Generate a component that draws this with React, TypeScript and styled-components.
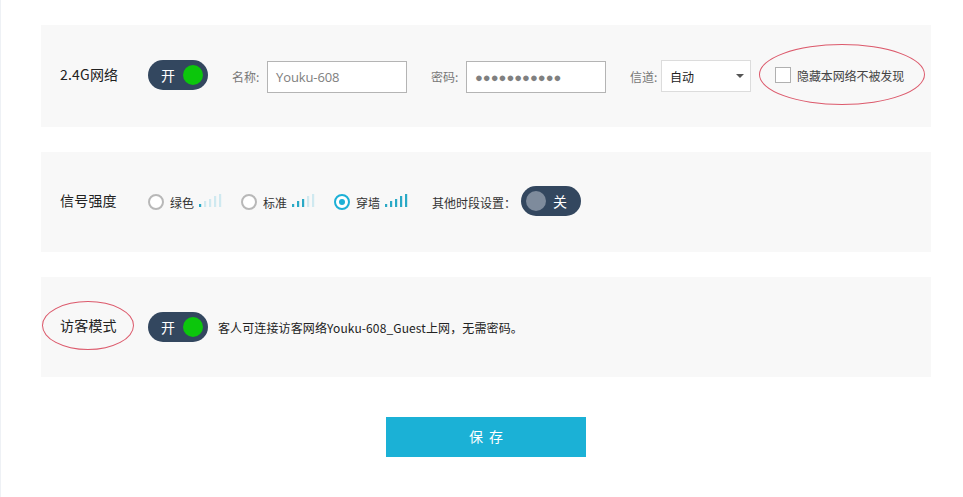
import React from "react";
import styled, { createGlobalStyle } from "styled-components";

const Global = createGlobalStyle`
  html, body {
    margin: 0;
    padding: 0;
    background: #fff;
  }
  body {
    font-family: "Noto Sans CJK SC", "Open Sans", sans-serif;
    overflow: hidden;
  }
`;

const Page = styled.div`
  width: 963px;
  height: 497px;
  box-sizing: border-box;
  padding: 25px 32px 0 40px;
  border-left: 1px solid #eef1f5;
  display: flex;
  flex-direction: column;
  gap: 25px;
`;

const Panel = styled.section<{ $h: number }>`
  height: ${(p) => p.$h}px;
  background: #f8f8f8;
  display: flex;
  align-items: center;
  padding-left: 19px;
  position: relative;
`;

const RowTitle = styled.div`
  width: 88px;
  flex: none;
  font-size: 14px;
  letter-spacing: 0.2px;
  color: #222;
  line-height: 20px;
  margin-top: -4px;
`;

const Toggle = styled.div<{ $on: boolean; $lift?: boolean }>`
  width: 60px;
  height: 30px;
  flex: none;
  box-sizing: border-box;
  margin-top: ${(p) => (p.$lift ? "-2px" : "0")};
  border-radius: 15px;
  background: #33475f;
  display: flex;
  flex-direction: ${(p) => (p.$on ? "row" : "row-reverse")};
  align-items: center;
  justify-content: space-between;
  padding: 0 ${(p) => (p.$on ? "5px" : "14px")} 0 ${(p) => (p.$on ? "13px" : "5px")};
  color: #fff;
  font-size: 14px;
`;

const Knob = styled.span<{ $on: boolean }>`
  width: 20px;
  height: 20px;
  border-radius: 50%;
  background: ${(p) => (p.$on ? "#0cc60c" : "#7e8b9c")};
`;

const FieldLabel = styled.label<{ $gap?: number }>`
  width: 27px;
  flex: none;
  margin-left: 24px;
  margin-right: ${(p) => p.$gap ?? 8}px;
  font-size: 12px;
  color: #777;
  white-space: nowrap;
`;

const TextBox = styled.div<{ $dots?: boolean }>`
  width: 140px;
  height: 32px;
  box-sizing: border-box;
  flex: none;
  margin-top: 2px;
  border: 1px solid #b4b4b4;
  background: #fff;
  padding-left: 8px;
  display: flex;
  align-items: center;
  font-family: "Open Sans", sans-serif;
  font-size: 13px;
  color: #808080;
  letter-spacing: ${(p) => (p.$dots ? "0" : "-0.1px")};
`;

const SelectBox = styled.div`
  width: 90px;
  height: 32px;
  box-sizing: border-box;
  flex: none;
  border: 1px solid #dcdcdc;
  background: #fff;
  padding: 0 6px 0 8px;
  display: flex;
  align-items: center;
  justify-content: space-between;
  font-size: 12px;
  color: #222;
`;

const Caret = styled.span`
  width: 0;
  height: 0;
  border-left: 4px solid transparent;
  border-right: 4px solid transparent;
  border-top: 4px solid #555;
`;

const CheckRow = styled.div`
  margin-left: 24px;
  display: flex;
  align-items: center;
  gap: 6px;
  font-size: 12px;
  letter-spacing: -0.1px;
  color: #444;
  margin-top: -2px;
`;

const CheckBox = styled.span`
  width: 16px;
  height: 16px;
  box-sizing: border-box;
  background: #fff;
  border: 1px solid #b0b0b0;
`;

const Option = styled.div<{ $left?: number }>`
  display: flex;
  align-items: center;
  margin-left: ${(p) => p.$left ?? 0}px;
  font-size: 12px;
  color: #333;
`;

const Radio = styled.span<{ $on?: boolean }>`
  width: 16px;
  height: 16px;
  box-sizing: border-box;
  flex: none;
  border-radius: 50%;
  background: #fff;
  border: 2px solid ${(p) => (p.$on ? "#1cb0d6" : "#b8b8b8")};
  margin-right: 6px;
  display: flex;
  align-items: center;
  justify-content: center;
  &::after {
    content: "";
    display: ${(p) => (p.$on ? "block" : "none")};
    width: 6px;
    height: 6px;
    border-radius: 50%;
    background: #1cb0d6;
  }
`;

const Bars = styled.svg`
  margin: -4px 0 0 5px;
  flex: none;
`;

const Inline = styled.div`
  margin-left: 24px;
  margin-right: 5px;
  font-size: 12px;
  color: #333;
  white-space: nowrap;
`;

const Note = styled.div`
  margin-left: 10px;
  font-size: 12px;
  letter-spacing: 0.12px;
  color: #222;
  white-space: nowrap;
`;

const Ellipse = styled.span<{ $l: number; $t: number; $w: number; $h: number }>`
  position: absolute;
  left: ${(p) => p.$l}px;
  top: ${(p) => p.$t}px;
  width: ${(p) => p.$w}px;
  height: ${(p) => p.$h}px;
  box-sizing: border-box;
  border: 1px solid #dc5a6c;
  border-radius: 50%;
  pointer-events: none;
`;

const SaveRow = styled.div`
  display: flex;
  justify-content: center;
  margin-top: 15px;
`;

const SaveButton = styled.button`
  width: 200px;
  height: 40px;
  border: 0;
  padding: 0 0 3px 6px;
  background: #1bb1d6;
  color: #fff;
  font-family: inherit;
  font-size: 14px;
  letter-spacing: 6px;
`;

function SignalBars({ lit }: { lit: number }) {
  const heights = [3, 6, 8, 11, 13];
  return (
    <Bars width="23" height="13" viewBox="0 0 23 13">
      {heights.map((h, i) => (
        <rect
          key={i}
          x={i * 5}
          y={13 - h}
          width="2.2"
          height={h}
          fill={i < lit ? "#2aa9c6" : "#cfe9f0"}
        />
      ))}
    </Bars>
  );
}

function Switch({ on, lift }: { on: boolean; lift?: boolean }) {
  return (
    <Toggle $on={on} $lift={lift}>
      <span>{on ? "开" : "关"}</span>
      <Knob $on={on} />
    </Toggle>
  );
}

export default function App() {
  return (
    <Page>
      <Global />
      <Panel $h={102}>
        <RowTitle>2.4G网络</RowTitle>
        <Switch on lift />
        <FieldLabel>名称:</FieldLabel>
        <TextBox>Youku-608</TextBox>
        <FieldLabel>密码:</FieldLabel>
        <TextBox $dots>●●●●●●●●●●●</TextBox>
        <FieldLabel $gap={4}>信道:</FieldLabel>
        <SelectBox>
          自动
          <Caret />
        </SelectBox>
        <CheckRow>
          <CheckBox />
          隐藏本网络不被发现
        </CheckRow>
        <Ellipse $l={718} $t={19} $w={166} $h={61} />
      </Panel>
      <Panel $h={100}>
        <RowTitle>信号强度</RowTitle>
        <Option>
          <Radio />
          绿色
          <SignalBars lit={1} />
        </Option>
        <Option $left={19}>
          <Radio />
          标准
          <SignalBars lit={3} />
        </Option>
        <Option $left={19}>
          <Radio $on />
          穿墙
          <SignalBars lit={5} />
        </Option>
        <Inline>其他时段设置：</Inline>
        <Switch on={false} lift />
      </Panel>
      <Panel $h={100}>
        <RowTitle>访客模式</RowTitle>
        <Switch on />
        <Note>客人可连接访客网络Youku-608_Guest上网，无需密码。</Note>
        <Ellipse $l={1} $t={24} $w={92} $h={49} />
      </Panel>
      <SaveRow>
        <SaveButton>保存</SaveButton>
      </SaveRow>
    </Page>
  );
}
